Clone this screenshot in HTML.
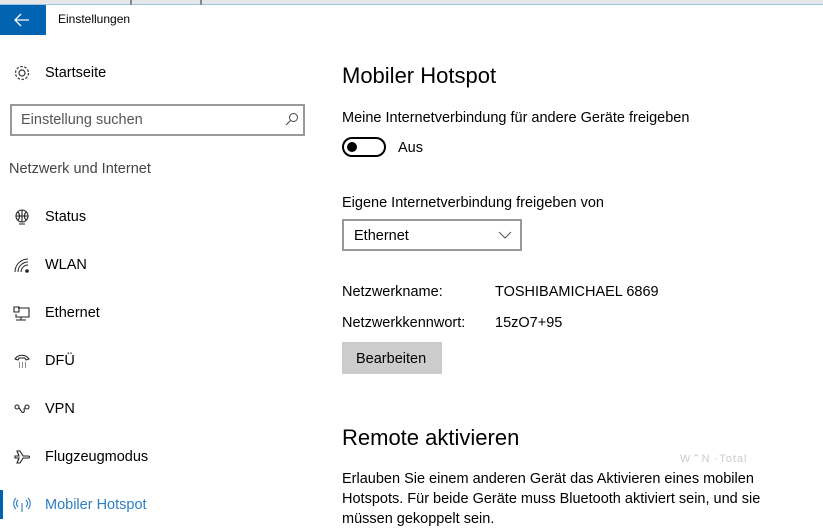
<!DOCTYPE html>
<html><head><meta charset="utf-8"><style>
*{margin:0;padding:0;box-sizing:border-box}
body{width:823px;height:519px;overflow:hidden;background:#fff;font-family:"Liberation Sans",sans-serif;color:#000;position:relative}
.a{position:absolute;white-space:nowrap}
.s{font-size:14.5px}
.nav{font-size:14.5px;left:45px}
.ic{position:absolute;left:13px}
</style></head><body>
<div class="a" style="left:0;top:0;width:823px;height:5px;background:#e6e6e6;border-bottom:1px solid #9cc6e6"></div>
<div class="a" style="left:130px;top:0;width:2px;height:5px;background:#888"></div>
<div class="a" style="left:200px;top:0;width:2px;height:5px;background:#888"></div>
<div class="a" style="left:0;top:5px;width:46px;height:30px;background:#0063b1"></div>
<svg class="a" style="left:14px;top:13px" width="16" height="14" viewBox="0 0 16 14"><path d="M1 7H15M7 1L1 7L7 13" stroke="#fff" stroke-width="1.3" fill="none"/></svg>
<div class="a" style="left:58px;top:12px;font-size:12px">Einstellungen</div>

<svg class="ic" style="top:64px" width="18" height="18" viewBox="0 0 18 18"><circle cx="9" cy="9" r="3" fill="none" stroke="#333" stroke-width="1.2"/><circle cx="9" cy="9" r="6.5" fill="none" stroke="#333" stroke-width="1.2" stroke-dasharray="2.5 1.6"/></svg>
<div class="a s" style="left:45px;top:65px">Startseite</div>
<div class="a" style="left:10px;top:104px;width:295px;height:32px;border:2px solid #999"></div>
<div class="a s" style="left:21px;top:112px;color:#555">Einstellung suchen</div>
<svg class="a" style="left:285px;top:112px" width="14" height="14" viewBox="0 0 14 14"><circle cx="8.5" cy="5.5" r="4" fill="none" stroke="#444"/><path d="M5.5 8.5L1 13" stroke="#444"/></svg>
<div class="a s" style="left:9px;top:161px;color:#444">Netzwerk und Internet</div>

<svg class="ic" style="top:208px" width="18" height="18" viewBox="0 0 18 18" fill="none" stroke="#222" stroke-width="1.1"><circle cx="9" cy="8" r="6"/><path d="M3 8H15M9 2V14M5 4C7 6 7 10 5 12M13 4C11 6 11 10 13 12M6 16H12"/></svg>
<div class="a nav" style="top:209px">Status</div>
<svg class="ic" style="top:257px" width="18" height="18" viewBox="0 0 18 18" fill="none" stroke="#222" stroke-width="1"><path d="M2 15A13 13 0 0 1 15 2M5 15A10 10 0 0 1 15 5M8 15A7 7 0 0 1 15 8"/><circle cx="14" cy="14" r="1.3" fill="#222"/></svg>
<div class="a nav" style="top:257px">WLAN</div>
<svg class="ic" style="top:305px" width="18" height="18" viewBox="0 0 18 18" fill="none" stroke="#222" stroke-width="1.1"><path d="M5 3H16V12H3V9M3 15H13M8 12V15M1 2H6V7H1Z"/></svg>
<div class="a nav" style="top:305px">Ethernet</div>
<svg class="ic" style="top:352px" width="18" height="18" viewBox="0 0 18 18" fill="none" stroke="#222" stroke-width="1.1"><path d="M2 7C5 2 13 2 16 7L13 8L12 6H6L5 8Z"/><path d="M6 11H7M9 11H10M12 11H13M6 13H7M9 13H10M12 13H13M6 15H7M9 15H10M12 15H13"/></svg>
<div class="a nav" style="top:353px">DFÜ</div>
<svg class="ic" style="top:400px" width="18" height="18" viewBox="0 0 18 18" fill="none" stroke="#222" stroke-width="1.1"><circle cx="4" cy="7" r="2"/><circle cx="14" cy="7" r="2"/><path d="M6 8C8 10 9 14 11 12C12 10 10 8 12 8"/></svg>
<div class="a nav" style="top:401px">VPN</div>
<svg class="ic" style="top:448px" width="18" height="18" viewBox="0 0 18 18" fill="none" stroke="#222" stroke-width="1.1"><path d="M2 8H6L4 3H7L10 8H15C17 8 17 10 15 10H10L7 15H4L6 10H2Z"/></svg>
<div class="a nav" style="top:449px">Flugzeugmodus</div>
<div class="a" style="left:0;top:490px;width:3px;height:29px;background:#0063b1"></div>
<svg class="ic" style="top:496px" width="18" height="18" viewBox="0 0 18 18" fill="none" stroke="#2d7fc1" stroke-width="1.1"><path d="M9 7V16M5 4C3 6 3 9 5 11M13 4C15 6 15 9 13 11M3 2C0 5 0 10 3 13M15 2C18 5 18 10 15 13"/></svg>
<div class="a nav" style="top:497px;color:#2d7fc1">Mobiler Hotspot</div>

<div class="a" style="left:342px;top:63px;font-size:22px">Mobiler Hotspot</div>
<div class="a s" style="left:342px;top:110px">Meine Internetverbindung für andere Geräte freigeben</div>
<div class="a" style="left:342px;top:137px;width:44px;height:20px;border:2px solid #000;border-radius:10px"></div>
<div class="a" style="left:347px;top:142px;width:10px;height:10px;border-radius:5px;background:#000"></div>
<div class="a s" style="left:398px;top:140px">Aus</div>
<div class="a s" style="left:342px;top:195px">Eigene Internetverbindung freigeben von</div>
<div class="a" style="left:342px;top:219px;width:180px;height:32px;border:2px solid #999"></div>
<div class="a s" style="left:354px;top:228px">Ethernet</div>
<svg class="a" style="left:498px;top:231px" width="14" height="8" viewBox="0 0 14 8"><path d="M1 1L7 7L13 1" stroke="#555" fill="none"/></svg>
<div class="a s" style="left:342px;top:284px">Netzwerkname:</div>
<div class="a s" style="left:495px;top:284px">TOSHIBAMICHAEL 6869</div>
<div class="a s" style="left:342px;top:315px">Netzwerkkennwort:</div>
<div class="a s" style="left:495px;top:315px">15zO7+95</div>
<div class="a" style="left:342px;top:342px;width:100px;height:32px;background:#ccc"></div>
<div class="a s" style="left:356px;top:351px">Bearbeiten</div>
<div class="a" style="left:342px;top:425px;font-size:22px">Remote aktivieren</div>
<div class="a" style="left:680px;top:452px;font-size:11px;color:#ccc;letter-spacing:1px">W⌃N ·Total</div>
<div class="a s" style="left:342px;top:469px;line-height:20px">Erlauben Sie einem anderen Gerät das Aktivieren eines mobilen<br>Hotspots. Für beide Geräte muss Bluetooth aktiviert sein, und sie<br>müssen gekoppelt sein.</div>
</body></html>
